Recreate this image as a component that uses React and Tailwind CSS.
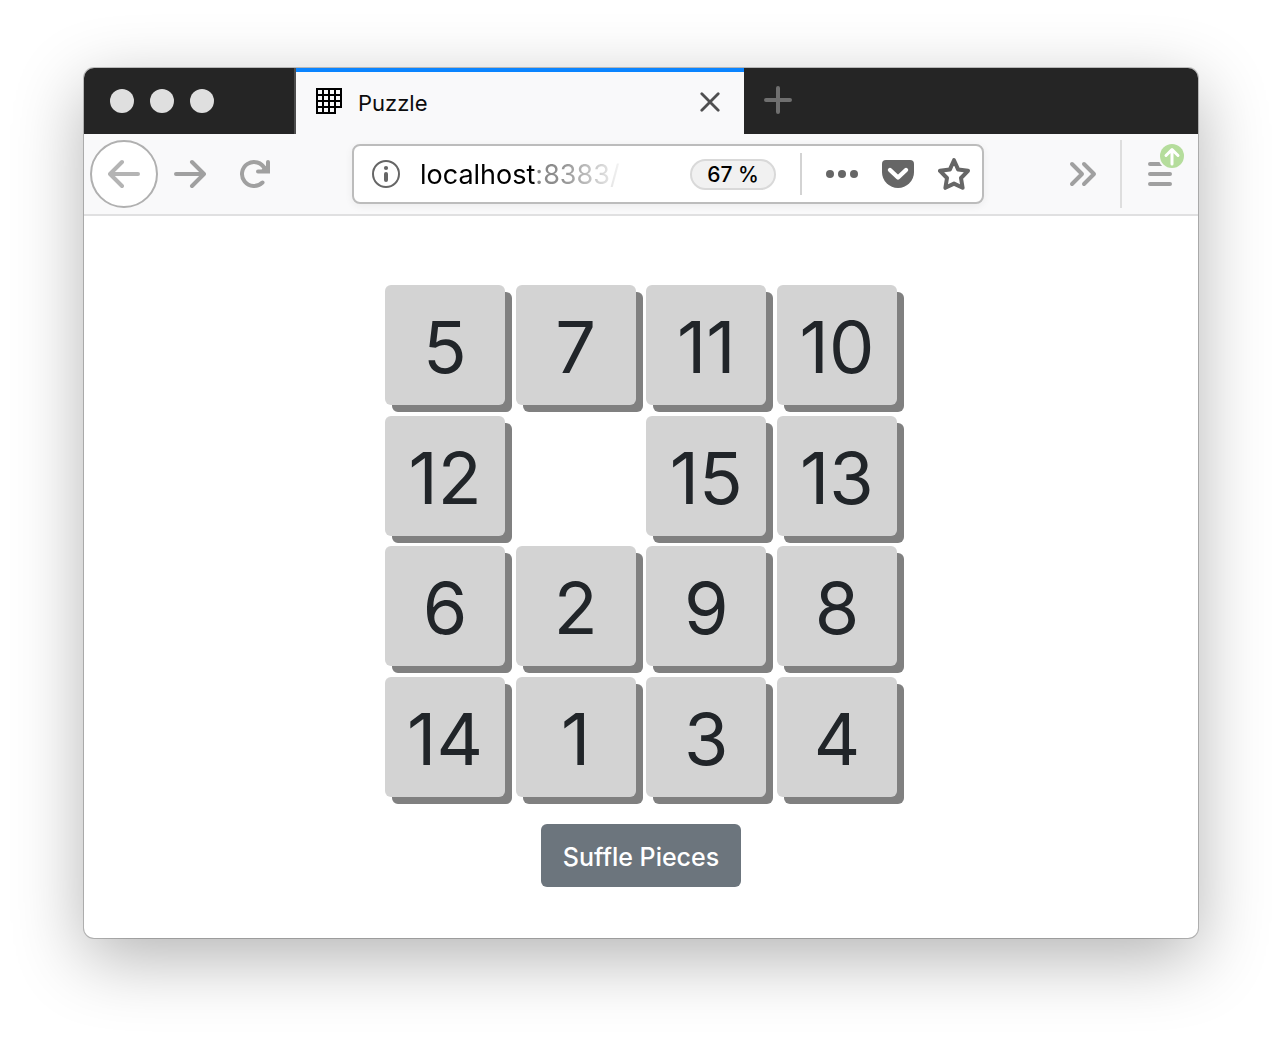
import { useState } from "react";

const START = [5, 7, 11, 10, 12, 0, 15, 13, 6, 2, 9, 8, 14, 1, 3, 4];

function TabStrip() {
  return (
    <div className="flex h-[66px] bg-[#252525]">
      <div className="flex w-[212px] shrink-0 items-center gap-4 border-r-2 border-[#4d4d4d] pl-[26px]">
        <button aria-label="Close window" className="size-6 rounded-full bg-[#dfdfdf]" />
        <button aria-label="Minimize window" className="size-6 rounded-full bg-[#dfdfdf]" />
        <button aria-label="Zoom window" className="size-6 rounded-full bg-[#dfdfdf]" />
      </div>
      <div className="flex w-[448px] items-center border-t-4 border-[#0a84ff] bg-[#f9f9fa] pr-6 pl-5">
        <svg className="mb-1 size-[26px]" viewBox="0 0 26 26" fill="none" stroke="#000" strokeWidth="2" shapeRendering="crispEdges" aria-hidden="true">
          <path d="M1 0V26M7 0V26M13 0V26M19 0V26M25 0V20M0 1H26M0 7H26M0 13H26M0 19H26M0 25H20" />
        </svg>
        <span className="ml-4 grow text-[22px] leading-8 text-[#0c0c0d]">Puzzle</span>
        <button aria-label="Close tab" className="mb-[2px]">
          <svg className="size-5" viewBox="0 0 20 20" fill="none" stroke="#4f4f50" strokeWidth="2.8" strokeLinecap="round" aria-hidden="true">
            <path d="M1.8 1.8L18.2 18.2M18.2 1.8L1.8 18.2" />
          </svg>
        </button>
      </div>
      <button aria-label="New tab" className="mb-[2px] pl-5">
        <svg className="size-7" viewBox="0 0 28 28" fill="none" stroke="#6f6f6f" strokeWidth="4" strokeLinecap="round" aria-hidden="true">
          <path d="M14 2V26M2 14H26" />
        </svg>
      </button>
    </div>
  );
}

function AddressBar() {
  return (
    <div className="ml-[82px] flex h-[60px] min-w-0 grow items-center rounded-lg border-2 border-[#bcbcbc] bg-white pr-3 pl-[18px] shadow-[0_2px_8px_rgba(0,0,0,0.06)]">
      <button aria-label="Site information" className="shrink-0">
        <svg className="size-7" viewBox="0 0 28 28" fill="none" aria-hidden="true">
          <circle cx="14" cy="14" r="13" stroke="#666" strokeWidth="2" />
          <circle cx="14" cy="8" r="2.1" fill="#666" />
          <path d="M14 14V20" stroke="#666" strokeWidth="4" strokeLinecap="round" />
        </svg>
      </button>
      <input
        aria-label="Address"
        defaultValue="localhost:8383/"
        className="ml-5 w-[200px] min-w-0 bg-linear-[90deg,#000_116px,#858585_117px,#8f8f8f_140px,transparent_206px] bg-clip-text pt-[2px] text-[27px] leading-9 text-transparent outline-none"
      />
      <button className="ml-auto h-[31px] w-[86px] shrink-0 rounded-full border-2 border-[#d9d9d9] bg-[#f1f1f1] text-[21px] leading-[27px] font-medium text-black">67 %</button>
      <div className="ml-6 h-[42px] w-[2px] shrink-0 bg-[#d3d3d3]" />
      <div className="ml-6 flex shrink-0 items-center gap-6">
        <button aria-label="Page actions">
          <svg className="size-8" viewBox="0 0 32 32" fill="#666" aria-hidden="true">
            <circle cx="4" cy="16" r="4" />
            <circle cx="16" cy="16" r="4" />
            <circle cx="28" cy="16" r="4" />
          </svg>
        </button>
        <button aria-label="Save to Pocket">
          <svg className="size-8" viewBox="0 0 32 32" aria-hidden="true">
            <path d="M4 2H28a4 4 0 0 1 4 4V14a16 16 0 0 1-32 0V6a4 4 0 0 1 4-4Z" fill="#666" />
            <path d="M8 12L16 19.5L24 12" fill="none" stroke="#fff" strokeWidth="4.4" strokeLinecap="round" strokeLinejoin="round" />
          </svg>
        </button>
        <button aria-label="Bookmark this page">
          <svg className="size-8" viewBox="0 0 32 32" fill="none" stroke="#666" strokeWidth="4" strokeLinejoin="round" aria-hidden="true">
            <path d="M16 2.2L20.2 11.6L30 12.8L23 20L24.6 29.8L16 25.6L7.4 29.8L9 20L2 12.8L11.8 11.6Z" />
          </svg>
        </button>
      </div>
    </div>
  );
}

function Toolbar() {
  return (
    <div className="flex h-[82px] items-center border-b-2 border-[#e0e0e1] bg-[#f9f9fa] px-[6px]">
      <button aria-label="Back" className="grid size-[68px] shrink-0 place-items-center rounded-full border-2 border-[#b0b0b0] bg-white">
        <svg className="size-8" viewBox="0 0 32 32" fill="none" stroke="#b4b4b4" strokeWidth="4" strokeLinecap="round" strokeLinejoin="round" aria-hidden="true">
          <path d="M30 16H3M14 4L2 16L14 28" />
        </svg>
      </button>
      <button aria-label="Forward" className="ml-4 shrink-0">
        <svg className="size-8" viewBox="0 0 32 32" fill="none" stroke="#a0a0a0" strokeWidth="4" strokeLinecap="round" strokeLinejoin="round" aria-hidden="true">
          <path d="M2 16H29M18 4L30 16L18 28" />
        </svg>
      </button>
      <button aria-label="Reload" className="ml-8 shrink-0">
        <svg className="size-8" viewBox="0 0 32 32" fill="none" stroke="#a0a0a0" strokeWidth="4" strokeLinecap="round" aria-hidden="true">
          <path d="M24.5 24.5A12 12 0 1 1 26.8 10.8M30 4V13.6H20" />
          <path d="M30 6V14H22L25 10Z" fill="#a0a0a0" stroke="none" />
        </svg>
      </button>
      <AddressBar />
      <button aria-label="More tools" className="ml-[84px] shrink-0">
        <svg className="size-8" viewBox="0 0 32 32" fill="none" stroke="#a0a0a0" strokeWidth="4" strokeLinecap="round" strokeLinejoin="round" aria-hidden="true">
          <path d="M4 6L14 16L4 26M16 6L26 16L16 26" />
        </svg>
      </button>
      <div className="ml-5 h-[68px] w-[2px] shrink-0 bg-[#dedede]" />
      <button aria-label="Open menu" className="relative ml-[22px] mr-2 shrink-0">
        <svg className="h-8 w-10" viewBox="0 0 40 32" fill="none" stroke="#a0a0a0" strokeWidth="4" strokeLinecap="round" aria-hidden="true">
          <path d="M6 6H26M6 16H26M6 26H26" />
        </svg>
        <svg className="absolute -top-4 left-[14px] size-7" viewBox="0 0 28 28" fill="none" aria-hidden="true">
          <circle cx="14" cy="14" r="14" fill="#f9f9fa" />
          <circle cx="14" cy="14" r="12" fill="#b5dd9c" />
          <path d="M14 22V8M8 13.5L14 7.5L20 13.5" stroke="#fff" strokeWidth="3" strokeLinecap="round" strokeLinejoin="round" />
        </svg>
      </button>
    </div>
  );
}

export default function App() {
  const [pieces, setPieces] = useState(START);

  const move = (index) => {
    const hole = pieces.indexOf(0);
    const rows = Math.abs(Math.floor(hole / 4) - Math.floor(index / 4));
    const cols = Math.abs((hole % 4) - (index % 4));
    if (rows + cols !== 1) return;
    const next = [...pieces];
    next[hole] = pieces[index];
    next[index] = 0;
    setPieces(next);
  };

  const shuffle = () => {
    const next = [...pieces];
    for (let i = next.length - 1; i > 0; i--) {
      const j = Math.floor(Math.random() * (i + 1));
      [next[i], next[j]] = [next[j], next[i]];
    }
    setPieces(next);
  };

  return (
    <div className="bg-white px-[84px] pt-[68px] pb-[100px] font-['Inter',sans-serif]">
      <div className="overflow-hidden rounded-[10px] bg-white shadow-[0_0_0_1px_rgba(0,0,0,0.22),0_20px_70px_rgba(0,0,0,0.3)]">
        <TabStrip />
        <Toolbar />
        <main className="flex flex-col items-center pt-[69px] pb-[51px]">
          <div className="grid size-[512px] grid-cols-[repeat(4,120px)] place-content-between">
            {pieces.map((n, i) =>
              n === 0 ? (
                <div key="hole" className="size-[120px]" />
              ) : (
                <button
                  key={n}
                  onClick={() => move(i)}
                  className="size-[120px] rounded-md bg-[#d3d3d3] pt-1 text-[72px] leading-[116px] text-[#212529] shadow-[7px_7px_0_#808080]"
                >
                  {n}
                </button>
              )
            )}
          </div>
          <button onClick={shuffle} className="mt-[27px] h-[63px] w-[200px] rounded-md bg-[#6c757d] pt-[2px] text-[25px] leading-9 font-medium text-white">
            Suffle Pieces
          </button>
        </main>
      </div>
    </div>
  );
}
